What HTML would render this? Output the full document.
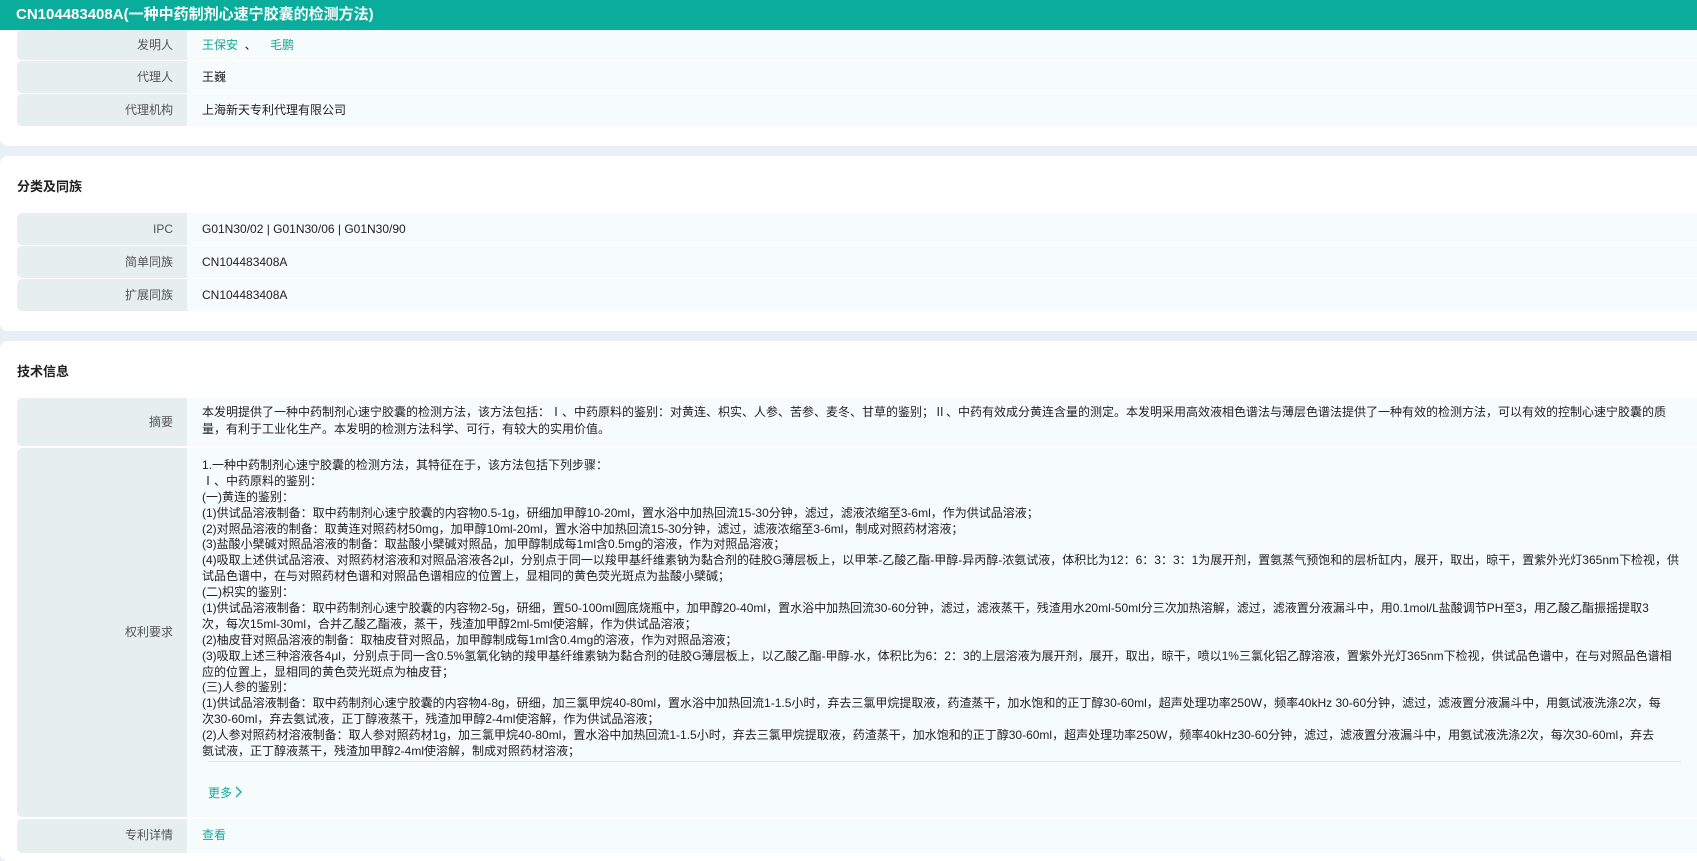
<!DOCTYPE html>
<html><head><meta charset="utf-8"><style>
*{margin:0;padding:0;box-sizing:border-box}
body{width:1697px;height:849px;overflow:hidden;background:#e9eff6;font-family:"Liberation Sans","Noto Sans CJK SC",sans-serif;color:#333;font-size:12px;position:relative}
.hdr{position:absolute;left:0;top:0;width:1697px;height:30px;background:#0aad9c;color:#fff;font-weight:bold;font-size:15px;line-height:30px;padding-left:16px}
.card{position:absolute;left:0;width:1710px;background:#fff;border-radius:8px}
.row{position:absolute;left:17px;width:1700px;display:flex}
.lab{width:170px;background:#e7eeee;border-radius:5px 0 0 5px;text-align:right;padding-right:14px;color:#555;flex:none}
.val{flex:1;background:#f6fbfb;padding-left:15px;color:#222}
.title{position:absolute;left:17px;font-weight:bold;font-size:13px;color:#222}
.a{color:#17a99a}
.claims div{white-space:nowrap;height:15.9px;line-height:15.9px}
</style></head><body>
<div class="card" style="top:0;height:146px;border-radius:0 0 8px 8px"></div>
<div class="hdr">CN104483408A(一种中药制剂心速宁胶囊的检测方法)</div>
<div class="row" style="top:30px;height:30px;line-height:30px"><div class="lab">发明人</div><div class="val"><span class="a">王保安</span>&nbsp;&nbsp;、&nbsp;&nbsp;&nbsp;&nbsp;<span class="a">毛鹏</span></div></div>
<div class="row" style="top:61px;height:32px;line-height:32px"><div class="lab">代理人</div><div class="val">王巍</div></div>
<div class="row" style="top:94px;height:32px;line-height:32px"><div class="lab">代理机构</div><div class="val">上海新天专利代理有限公司</div></div>

<div class="card" style="top:156px;height:175px"></div>
<div class="title" style="top:176px">分类及同族</div>
<div class="row" style="top:213px;height:32px;line-height:32px"><div class="lab">IPC</div><div class="val">G01N30/02 | G01N30/06 | G01N30/90</div></div>
<div class="row" style="top:246px;height:32px;line-height:32px"><div class="lab">简单同族</div><div class="val">CN104483408A</div></div>
<div class="row" style="top:279px;height:32px;line-height:32px"><div class="lab">扩展同族</div><div class="val">CN104483408A</div></div>

<div class="card" style="top:341px;height:520px"></div>
<div class="title" style="top:361px">技术信息</div>
<div class="row" style="top:398px;height:48px"><div class="lab" style="line-height:48px">摘要</div><div class="val" style="padding-top:6px;line-height:17px;white-space:nowrap">本发明提供了一种中药制剂心速宁胶囊的检测方法，该方法包括：Ⅰ、中药原料的鉴别：对黄连、枳实、人参、苦参、麦冬、甘草的鉴别；Ⅱ、中药有效成分黄连含量的测定。本发明采用高效液相色谱法与薄层色谱法提供了一种有效的检测方法，可以有效的控制心速宁胶囊的质<br>量，有利于工业化生产。本发明的检测方法科学、可行，有较大的实用价值。</div></div>
<div class="row" style="top:448px;height:369px"><div class="lab" style="line-height:369px">权利要求</div><div class="val" style="position:relative">
<div class="claims" style="position:absolute;left:15px;top:10px;overflow:hidden;width:1490px">
<div>1.一种中药制剂心速宁胶囊的检测方法，其特征在于，该方法包括下列步骤：</div>
<div>Ⅰ、中药原料的鉴别：</div>
<div>(一)黄连的鉴别：</div>
<div>(1)供试品溶液制备：取中药制剂心速宁胶囊的内容物0.5-1g，研细加甲醇10-20ml，置水浴中加热回流15-30分钟，滤过，滤液浓缩至3-6ml，作为供试品溶液；</div>
<div>(2)对照品溶液的制备：取黄连对照药材50mg，加甲醇10ml-20ml，置水浴中加热回流15-30分钟，滤过，滤液浓缩至3-6ml，制成对照药材溶液；</div>
<div>(3)盐酸小檗碱对照品溶液的制备：取盐酸小檗碱对照品，加甲醇制成每1ml含0.5mg的溶液，作为对照品溶液；</div>
<div>(4)吸取上述供试品溶液、对照药材溶液和对照品溶液各2μl，分别点于同一以羧甲基纤维素钠为黏合剂的硅胶G薄层板上，以甲苯-乙酸乙酯-甲醇-异丙醇-浓氨试液，体积比为12：6：3：3：1为展开剂，置氨蒸气预饱和的层析缸内，展开，取出，晾干，置紫外光灯365nm下检视，供</div>
<div>试品色谱中，在与对照药材色谱和对照品色谱相应的位置上，显相同的黄色荧光斑点为盐酸小檗碱；</div>
<div>(二)枳实的鉴别：</div>
<div>(1)供试品溶液制备：取中药制剂心速宁胶囊的内容物2-5g，研细，置50-100ml圆底烧瓶中，加甲醇20-40ml，置水浴中加热回流30-60分钟，滤过，滤液蒸干，残渣用水20ml-50ml分三次加热溶解，滤过，滤液置分液漏斗中，用0.1mol/L盐酸调节PH至3，用乙酸乙酯振摇提取3</div>
<div>次，每次15ml-30ml，合并乙酸乙酯液，蒸干，残渣加甲醇2ml-5ml使溶解，作为供试品溶液；</div>
<div>(2)柚皮苷对照品溶液的制备：取柚皮苷对照品，加甲醇制成每1ml含0.4mg的溶液，作为对照品溶液；</div>
<div>(3)吸取上述三种溶液各4μl，分别点于同一含0.5%氢氧化钠的羧甲基纤维素钠为黏合剂的硅胶G薄层板上，以乙酸乙酯-甲醇-水，体积比为6：2：3的上层溶液为展开剂，展开，取出，晾干，喷以1%三氯化铝乙醇溶液，置紫外光灯365nm下检视，供试品色谱中，在与对照品色谱相</div>
<div>应的位置上，显相同的黄色荧光斑点为柚皮苷；</div>
<div>(三)人参的鉴别：</div>
<div>(1)供试品溶液制备：取中药制剂心速宁胶囊的内容物4-8g，研细，加三氯甲烷40-80ml，置水浴中加热回流1-1.5小时，弃去三氯甲烷提取液，药渣蒸干，加水饱和的正丁醇30-60ml，超声处理功率250W，频率40kHz 30-60分钟，滤过，滤液置分液漏斗中，用氨试液洗涤2次，每</div>
<div>次30-60ml，弃去氨试液，正丁醇液蒸干，残渣加甲醇2-4ml使溶解，作为供试品溶液；</div>
<div>(2)人参对照药材溶液制备：取人参对照药材1g，加三氯甲烷40-80ml，置水浴中加热回流1-1.5小时，弃去三氯甲烷提取液，药渣蒸干，加水饱和的正丁醇30-60ml，超声处理功率250W，频率40kHz30-60分钟，滤过，滤液置分液漏斗中，用氨试液洗涤2次，每次30-60ml，弃去</div>
<div>氨试液，正丁醇液蒸干，残渣加甲醇2-4ml使溶解，制成对照药材溶液；</div>
</div>
<div style="position:absolute;left:21px;top:313px;width:1473px;height:1px;background:#e2e4e8"></div>
<div class="a" style="position:absolute;left:21px;top:336px;font-size:12px">更多<svg width="9" height="12" viewBox="0 0 9 12" style="vertical-align:-1px;margin-left:2px"><path d="M2 1l5 5-5 5" fill="none" stroke="#17a99a" stroke-width="1.3"/></svg></div>
</div></div>
<div class="row" style="top:819px;height:34px;line-height:32px"><div class="lab">专利详情</div><div class="val"><span class="a">查看</span></div></div>
</body></html>
